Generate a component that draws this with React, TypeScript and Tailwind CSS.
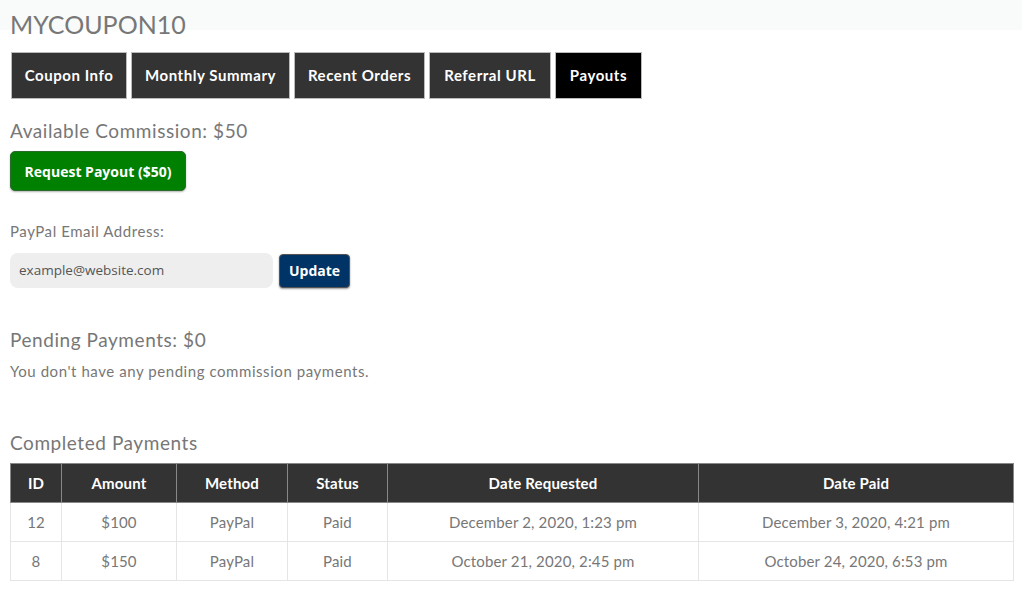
import React from "react";

const tabs = [
  { label: "Coupon Info", w: "w-[116px]" },
  { label: "Monthly Summary", w: "w-[159px]" },
  { label: "Recent Orders", w: "w-[131px]" },
  { label: "Referral URL", w: "w-[122px]" },
  { label: "Payouts", w: "w-[87px]" },
];

const rows = [
  { id: "12", amount: "$100", method: "PayPal", status: "Paid", requested: "December 2, 2020, 1:23 pm", paid: "December 3, 2020, 4:21 pm" },
  { id: "8", amount: "$150", method: "PayPal", status: "Paid", requested: "October 21, 2020, 2:45 pm", paid: "October 24, 2020, 6:53 pm" },
];

export default function App() {
  return (
    <div className="w-[1024px] h-[592px] bg-white text-[#777] font-['Lato',sans-serif] tracking-[0.035em] overflow-hidden">
      {/* Title */}
      <div className="h-[30px] bg-[#f9fbfa] px-[10px] mr-[2px]">
        <h1 className="text-[25px] leading-[48px] tracking-normal text-[#777]">MYCOUPON10</h1>
      </div>

      {/* Tabs */}
      <div className="flex gap-[4px] pl-[11px] pr-[10px] mt-[22px]">
        {tabs.map((t) => (
          <div
            key={t.label}
            className={`${t.w} h-[47px] flex items-center justify-center border border-[#bbb] text-white text-[15px] font-bold ${
              t.label === "Payouts" ? "bg-black" : "bg-[#333]"
            }`}
          >
            {t.label}
          </div>
        ))}
      </div>

      <div className="px-[10px]">
        {/* Available */}
        <h2 className="text-[19px] mt-[20px] leading-[24px]">Available Commission: $50</h2>
        <button className="mt-[8px] h-[40px] w-[176px] rounded-[5px] bg-[#008000] border border-[#2b6b2b] shadow-[0_1px_2px_rgba(0,0,0,0.3)] text-white text-[14px] font-bold tracking-normal font-['Open_Sans',sans-serif]">
          Request Payout ($50)
        </button>

        <p className="text-[15px] mt-[30px] leading-[20px]">PayPal Email Address:</p>
        <div className="flex items-center gap-[6px] mt-[12px]">
          <div className="w-[263px] h-[35px] rounded-[8px] bg-[#eee] flex items-center px-[9px] text-[13.5px] text-[#555] tracking-normal font-['Open_Sans',sans-serif]">
            example@website.com
          </div>
          <button className="h-[34px] w-[71px] rounded-[4px] bg-[#003366] border border-[#555] shadow-[0_1px_2px_rgba(0,0,0,0.4)] text-white text-[14px] font-bold tracking-normal font-['Open_Sans',sans-serif]">
            Update
          </button>
        </div>

        {/* Pending */}
        <h2 className="text-[19px] mt-[40px] leading-[24px]">Pending Payments: $0</h2>
        <p className="text-[15px] mt-[9px] leading-[20px]">You don't have any pending commission payments.</p>

        {/* Completed */}
        <h2 className="text-[19px] mt-[50px] leading-[24px]">Completed Payments</h2>

        <table className="mt-[8px] w-[1004px] border-collapse text-[15px] tracking-[0.01em] text-center">
          <thead>
            <tr className="bg-[#333] text-white font-bold h-[39px]">
              <th className="w-[51px] border border-[#888]">ID</th>
              <th className="w-[115px] border border-[#888]">Amount</th>
              <th className="w-[111px] border border-[#888]">Method</th>
              <th className="w-[100px] border border-[#888]">Status</th>
              <th className="w-[311px] border border-[#888]">Date Requested</th>
              <th className="border border-[#888]">Date Paid</th>
            </tr>
          </thead>
          <tbody>
            {rows.map((r) => (
              <tr key={r.id} className="h-[39px]">
                <td className="border border-[#e5e5e5]">{r.id}</td>
                <td className="border border-[#e5e5e5]">{r.amount}</td>
                <td className="border border-[#e5e5e5]">{r.method}</td>
                <td className="border border-[#e5e5e5]">{r.status}</td>
                <td className="border border-[#e5e5e5]">{r.requested}</td>
                <td className="border border-[#e5e5e5]">{r.paid}</td>
              </tr>
            ))}
          </tbody>
        </table>
      </div>
    </div>
  );
}
